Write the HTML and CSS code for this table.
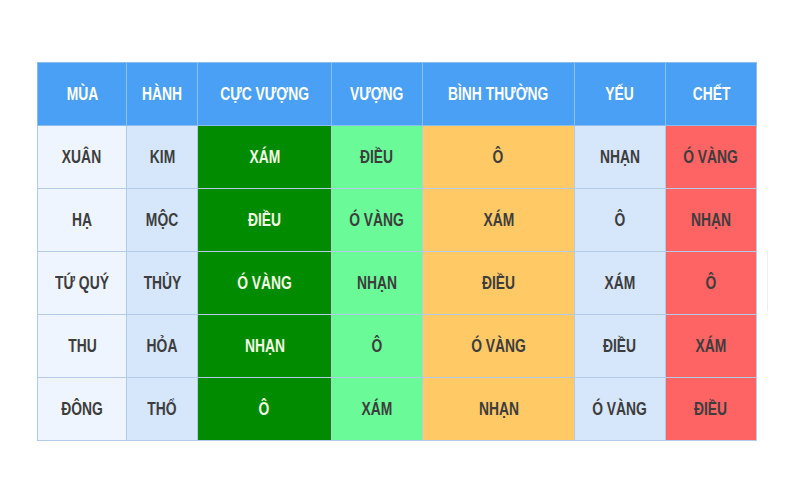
FILE: index.html
```html
<!DOCTYPE html>
<html lang="vi">
<head>
<meta charset="utf-8">
<title>Bảng mùa hành</title>
<link rel="stylesheet" href="styles.css">
</head>
<body>
<main class="page">
<table class="grid">
  <colgroup>
    <col class="c1"><col class="c2"><col class="c3"><col class="c4"><col class="c5"><col class="c6"><col class="c7">
  </colgroup>
  <thead>
    <tr>
      <th><span class="t">MÙA</span></th><th><span class="t">HÀNH</span></th><th><span class="t">CỰC VƯỢNG</span></th><th><span class="t">VƯỢNG</span></th><th><span class="t">BÌNH THƯỜNG</span></th><th><span class="t">YẾU</span></th><th><span class="t">CHẾT</span></th>
    </tr>
  </thead>
  <tbody>
    <tr><td class="season"><span class="t">XUÂN</span></td><td class="elem"><span class="t">KIM</span></td><td class="peak"><span class="t">XÁM</span></td><td class="strong"><span class="t">ĐIỀU</span></td><td class="normal"><span class="t">Ô</span></td><td class="weak"><span class="t">NHẠN</span></td><td class="dead"><span class="t">Ó VÀNG</span></td></tr>
    <tr><td class="season"><span class="t">HẠ</span></td><td class="elem"><span class="t">MỘC</span></td><td class="peak"><span class="t">ĐIỀU</span></td><td class="strong"><span class="t">Ó VÀNG</span></td><td class="normal"><span class="t">XÁM</span></td><td class="weak"><span class="t">Ô</span></td><td class="dead"><span class="t">NHẠN</span></td></tr>
    <tr><td class="season"><span class="t">TỨ QUÝ</span></td><td class="elem"><span class="t">THỦY</span></td><td class="peak"><span class="t">Ó VÀNG</span></td><td class="strong"><span class="t">NHẠN</span></td><td class="normal"><span class="t">ĐIỀU</span></td><td class="weak"><span class="t">XÁM</span></td><td class="dead"><span class="t">Ô</span></td></tr>
    <tr><td class="season"><span class="t">THU</span></td><td class="elem"><span class="t">HỎA</span></td><td class="peak"><span class="t">NHẠN</span></td><td class="strong"><span class="t">Ô</span></td><td class="normal"><span class="t">Ó VÀNG</span></td><td class="weak"><span class="t">ĐIỀU</span></td><td class="dead"><span class="t">XÁM</span></td></tr>
    <tr><td class="season"><span class="t">ĐÔNG</span></td><td class="elem"><span class="t">THỔ</span></td><td class="peak"><span class="t">Ô</span></td><td class="strong"><span class="t">XÁM</span></td><td class="normal"><span class="t">NHẠN</span></td><td class="weak"><span class="t">Ó VÀNG</span></td><td class="dead"><span class="t">ĐIỀU</span></td></tr>
  </tbody>
</table>
<div class="edge"></div>
</main>
</body>
</html>
```
FILE: styles.css
```css
html, body {
  margin: 0;
  padding: 0;
  background: #ffffff;
}
.page {
  width: 800px;
  height: 500px;
  padding: 62px 0 0 37px;
  box-sizing: border-box;
  display: flex;
  align-items: flex-start;
}
.grid {
  border-collapse: collapse;
  table-layout: fixed;
  width: 719px;
  font-family: "Liberation Sans", Arial, sans-serif;
  font-weight: bold;
  font-size: 18px;
}
.c1 { width: 89px; }
.c2 { width: 71px; }
.c3 { width: 134px; }
.c4 { width: 91px; }
.c5 { width: 152px; }
.c6 { width: 91px; }
.c7 { width: 91px; }
.grid th, .grid td {
  border: 1px solid #b3cbe6;
  text-align: center;
  vertical-align: middle;
  padding: 0;
  height: 62px;
  white-space: nowrap;
}
.t {
  display: inline-block;
  transform: scaleX(0.77);
  margin: 0 -30px;
}
.grid th {
  background: #4aa0f4;
  color: #ffffff;
  font-weight: bold;
  border-color: #8dbdee;
}
.grid td { color: #3d3d3d; }
.season { background: #eef5fe; }
.elem { background: #d6e6fb; }
.peak { background: #008b00; color: #f4f8e4 !important; }
.strong { background: #6afb98; }
.normal { background: #ffca66; }
.weak { background: #d6e6fb; }
.dead { background: #ff6464; }
.edge {
  margin: 188px 0 0 10px;
  width: 3px;
  height: 62px;
  border-left: 1px solid #eeeeee;
  border-radius: 3px;
}
```
